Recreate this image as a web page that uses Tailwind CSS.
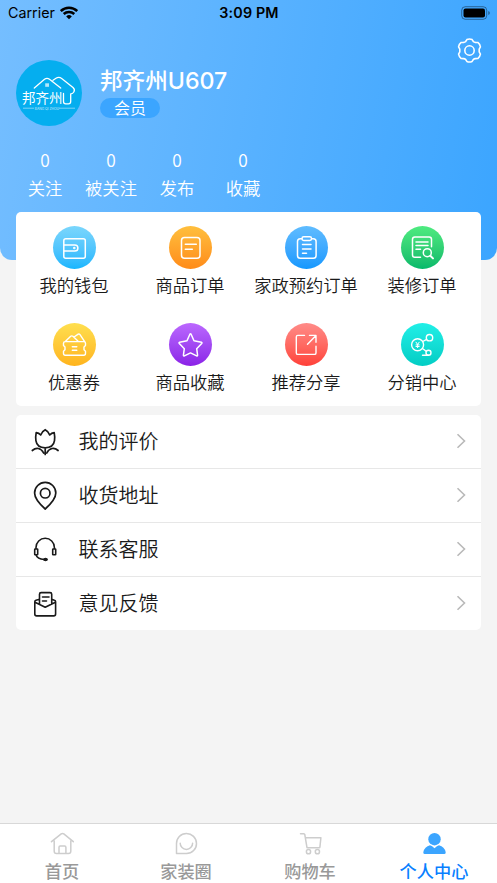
<!DOCTYPE html>
<html lang="zh-CN">
<head>
<meta charset="utf-8">
<title>个人中心</title>
<script src="https://cdn.jsdelivr.net/npm/@tailwindcss/browser@4"></script>
</head>
<body class="bg-[#f4f4f4] font-['Inter','Noto_Sans_CJK_SC',sans-serif] text-[#1a1a1a]">
<div class="w-[497px] h-[883px] flex flex-col overflow-hidden">
  <header class="h-[260px] shrink-0 rounded-b-[12px] bg-linear-[100deg,#75beff,#3ba5ff] text-white flex flex-col">
    <div class="h-[26px] pl-2 pr-[7px] flex items-center justify-between text-black text-[14.3px] leading-[26px]">
      <div class="w-[140px] flex items-center gap-[5px]"><span>Carrier</span>
        <svg width="18" height="14" viewBox="0 0 18 14" fill="none" stroke="#000" stroke-width="2.5"><path d="M.8 5A11.8 11.8 0 0 1 17.2 5M3.7 8a7.8 7.8 0 0 1 10.6 0"/><path d="M9 13.2 6.2 10.4a4 4 0 0 1 5.600 0Z" fill="#000" stroke="none"/></svg>
      </div>
      <span class="font-semibold tracking-[0.15px]">3:09 PM</span>
      <div class="w-[140px] flex justify-end">
        <svg width="29" height="14" viewBox="0 0 29 14"><rect x=".7" y=".7" width="25" height="12.6" rx="3.6" fill="none" stroke="#000" stroke-opacity=".4"/><rect x="2.5" y="2.4" width="21.5" height="9.2" rx="2" fill="#000"/><path d="M27.3 5v4q1.5-.5 1.5-2t-1.5-2Z" fill="#000" fill-opacity=".45"/></svg>
      </div>
    </div>
    <div class="h-[34px] pt-[12px] pr-[15.500px] flex justify-end">
      <svg class="shrink-0" width="25" height="25" viewBox="0 0 24 24" fill="none" stroke="#fff" stroke-width="1.500" stroke-linejoin="round"><path d="M9.500 1.500Q12 .4 14.500 1.500L15.700 3.400Q16.600 4 17.600 4.200L20 4.300Q22 5.800 22.500 8.500L21.300 10.700V13.300L22.500 15.500Q22 18.200 20 19.700L17.600 19.800Q16.600 20 15.700 20.600L14.500 22.500Q12 23.600 9.500 22.500L8.300 20.600Q7.400 20 6.400 19.800L4 19.700Q2 18.200 1.500 15.500L2.700 13.300V10.700L1.500 8.500Q2 5.800 4 4.300L6.400 4.200Q7.400 4 8.300 3.400Z"/><circle cx="12" cy="12" r="4.500"/></svg>
    </div>
    <div class="h-[66px] pl-4 flex gap-[18px]">
      <svg class="shrink-0" width="66" height="66" viewBox="0 0 66 66"><circle cx="33" cy="33" r="33" fill="#05aeef"/><g fill="none" stroke="#fff" stroke-width="1.300" stroke-linecap="round" stroke-linejoin="round"><path d="M18.300 28 28.500 19.300q2.500-2 5 0L44.700 28M37 20.200l3-2q3-1.700 6 .5L57 27.500q2.300 2.200.8 4.500-1 1.700-3.100 2v7.500q0 2.300-2.300 2.300h-2.700q-2.200 0-2.200-2.300v-8"/></g><path d="M29.200 23.300h3.800v3.500h-3.800z" fill="#fff" opacity=".7"/><text x="6" y="43.300" font-family="Noto Sans CJK SC" font-size="13.500" fill="#fff">邦齐州</text><path d="M7 48.200h11M43 48.200h16" stroke="#fff" stroke-opacity=".6" stroke-width=".8"/><text x="18.800" y="49.500" font-family="Inter" font-size="3.300" fill="#fff" opacity=".75">BANG QI ZHOU</text></svg>
      <div class="flex flex-col items-start">
        <div class="h-[38px] text-[22.600px] leading-[41px] font-medium whitespace-nowrap"><span>邦齐州</span><span class="text-[23.200px]">U607</span></div>
        <div class="w-[60px] h-[20px] rounded-full bg-[#3ba5ff] text-center text-[16px] leading-[20px] font-[350]">会员</div>
      </div>
    </div>
    <div class="pl-3 pt-[20px] flex text-[17.300px] text-center font-[350] font-['Noto_Sans_CJK_SC',sans-serif]">
      <div class="w-[66px]"><div class="h-[28px] leading-[27px]">0</div><div class="h-[28px] leading-[28px]">关注</div></div>
      <div class="w-[66px]"><div class="h-[28px] leading-[27px]">0</div><div class="h-[28px] leading-[28px]">被关注</div></div>
      <div class="w-[66px]"><div class="h-[28px] leading-[27px]">0</div><div class="h-[28px] leading-[28px]">发布</div></div>
      <div class="w-[66px]"><div class="h-[28px] leading-[27px]">0</div><div class="h-[28px] leading-[28px]">收藏</div></div>
    </div>
  </header>
  <main class="flex-1 -mt-[48px] px-4">
    <section class="h-[194px] pt-[14px] pr-[1px] rounded-[5px] bg-white grid grid-cols-4 auto-rows-[97px] text-[17.300px] leading-[26px] text-center whitespace-nowrap font-[350]">
      <div class="flex flex-col items-center gap-[4px]">
        <div class="size-[43px] rounded-full bg-linear-to-b from-[#7ad6fc] to-[#14b6fe]"><svg width="43" height="43" fill="none" stroke="#fff" stroke-width="1.500" stroke-linejoin="round"><rect x="10.800" y="12.800" width="21.500" height="19.500" rx="2"/><path d="M11 18.900h10.800a3.100 3.100 0 0 1 0 6.200H11"/><circle cx="21.300" cy="22" r=".5"/></svg></div><span>我的钱包</span></div>
      <div class="flex flex-col items-center gap-[4px]">
        <div class="size-[43px] rounded-full bg-linear-to-b from-[#ffbf3d] to-[#ff8b18]"><svg width="43" height="43" fill="none" stroke="#fff" stroke-width="1.500" stroke-linecap="round"><rect x="12.500" y="11.500" width="18.500" height="20.700" rx="3"/><path d="M16.300 18.200h11M16.300 23.200h7"/></svg></div><span>商品订单</span></div>
      <div class="flex flex-col items-center gap-[4px]">
        <div class="size-[43px] rounded-full bg-linear-to-b from-[#5fbcff] to-[#1298fe]"><svg width="43" height="43" fill="none" stroke="#fff" stroke-width="1.500" stroke-linecap="round"><path d="M16.800 12.800h-1.500q-2.800 0-2.800 2.800v13.900q0 2.800 2.800 2.800h13q2.800 0 2.800-2.800V15.600q0-2.800-2.800-2.800h-1.500"/><rect x="17" y="10.800" width="9.500" height="3.700" rx="1.700"/><path d="M17.500 18.500h8.500M17.500 23.100h8.500M17.500 27.300h4"/></svg></div><span>家政预约订单</span></div>
      <div class="flex flex-col items-center gap-[4px]">
        <div class="size-[43px] rounded-full bg-linear-to-b from-[#4eeb80] to-[#03b96a]"><svg width="43" height="43" fill="none" stroke="#fff" stroke-width="1.500" stroke-linecap="round"><path d="M19.500 31.300h-5.700q-2.300 0-2.300-2.300V13.200q0-2.300 2.300-2.300h14.400q2.300 0 2.300 2.300v7.500M15 16h12M15 19.600h12M15 23.200h4.500"/><circle cx="26.300" cy="26.700" r="4"/><path d="m29.300 29.700 2.700 2.700" stroke-width="2"/></svg></div><span>装修订单</span></div>
      <div class="flex flex-col items-center gap-[4px]">
        <div class="size-[43px] rounded-full bg-linear-to-b from-[#ffdf4e] to-[#ffb41c]"><svg width="43" height="43" fill="none" stroke="#fff" stroke-width="1.400" stroke-linejoin="round" stroke-linecap="round"><path d="M12.300 18.600h18.400q1.800 0 1.800 1.700v2.200l-1.500 1.500v2.800l1.500 1.500v2q0 2-1.800 2H12.300q-1.800 0-1.800-2v-2l1.500-1.500V24l-1.500-1.500v-2.200q0-1.700 1.800-1.700Z"/><path d="m12.500 18.300 5.200-5q1-.9 2.200 0l5 4.600M21 14l4.200-2.900q1-.5 1.800.5l4.500 6.700M19.300 23.700h4.500M19.300 27.300h4.500"/></svg></div><span>优惠券</span></div>
      <div class="flex flex-col items-center gap-[4px]">
        <div class="size-[43px] rounded-full bg-linear-to-b from-[#bb67fe] to-[#8b20e7]"><svg width="43" height="43" fill="none" stroke="#fff" stroke-width="1.500" stroke-linejoin="round"><path d="M20.900 11.200q.6-.8 1.200 0l2.900 6.500 7.400 1.500q1 .4.300 1.200l-5 5.300.9 6.600q-.1 1-1 .6l-6.100-3-6.100 3q-.9.400-1-.6l.9-6.600-5-5.300q-.7-.8.300-1.200l7.400-1.500Z"/></svg></div><span>商品收藏</span></div>
      <div class="flex flex-col items-center gap-[4px]">
        <div class="size-[43px] rounded-full bg-linear-to-b from-[#ff8b88] to-[#ff3f38]"><svg width="43" height="43" fill="none" stroke="#fff" stroke-width="1.400" stroke-linecap="round" stroke-linejoin="round"><path d="M19.500 12.400h-6.700q-1.500 0-1.500 1.500v16q0 1.500 1.500 1.500h16.700q1.500 0 1.500-1.500v-6.700M22.500 21.300l8.500-8.700M24.500 12.400H31v6.800"/></svg></div><span>推荐分享</span></div>
      <div class="flex flex-col items-center gap-[4px]">
        <div class="size-[43px] rounded-full bg-linear-to-b from-[#20efe7] to-[#02cdc4]"><svg width="43" height="43" fill="none" stroke="#fff" stroke-width="1.400" stroke-linecap="round"><circle cx="16.600" cy="21.700" r="6"/><circle cx="28.500" cy="14.700" r="3.200"/><circle cx="27.500" cy="29.700" r="2.500"/><path d="m21.700 18.500 4-2.200M21.500 25.500l3.700 2.700M21.500 32.200h6"/><path d="m15 19.200 1.600 2.200 1.600-2.200M16.600 21.400v3.200M15 21.900h3.200M15 23.500h3.200" stroke-width="1"/></svg></div><span>分销中心</span></div>
    </section>
    <section class="mt-[9px] rounded-[5px] bg-white overflow-hidden text-[20px] font-[350]">
      <div class="h-[54px] pl-[14px] pr-[15px] flex items-center border-b border-[#e7e7e7]">
        <svg width="30" height="30" fill="none" stroke="#1a1a1a" stroke-width="1.700" stroke-linecap="round" stroke-linejoin="round"><path d="M6.200 5.700q2.700.4 4.500 2.300 1.300-3.800 4.500-5.300 3.200 1.500 4.500 5.300 1.800-1.900 4.500-2.300.8 4 .3 8-1 7-9.300 7.100-8.300-.1-9.300-7.100-.5-4 .3-8ZM15.200 21v6.500M2.300 23.500q3-2.600 6-2 3.500.7 5.300 4.500M28.100 23.500q-3-2.600-6-2-3.500.7-5.300 4.500"/></svg><span class="ml-[18.500px] flex-1">我的评价</span><svg class="-mt-px" width="10" height="16" fill="none" stroke="#b9b9b9" stroke-width="1.600"><path d="m1.500 1.200 7 6.800-7 6.800"/></svg></div>
      <div class="h-[54px] pl-[14px] pr-[15px] flex items-center border-b border-[#e7e7e7]">
        <svg width="30" height="30" fill="none" stroke="#1a1a1a" stroke-width="1.700" stroke-linejoin="round"><path d="M15.200 28Q4.600 18.500 4.600 12a10.600 10.600 0 0 1 21.200 0q0 6.500-10.600 16Z"/><circle cx="15.200" cy="12.200" r="4.800"/></svg><span class="ml-[18.500px] flex-1">收货地址</span><svg class="-mt-px" width="10" height="16" fill="none" stroke="#b9b9b9" stroke-width="1.600"><path d="m1.500 1.200 7 6.800-7 6.800"/></svg></div>
      <div class="h-[54px] pl-[14px] pr-[15px] flex items-center border-b border-[#e7e7e7]">
        <svg width="30" height="30" fill="none" stroke="#1a1a1a" stroke-width="1.600" stroke-linejoin="round"><path d="M6 14v-1.500a9.200 9.200 0 0 1 18.400 0V14M6 20q1.500 4 8 4.500"/><rect x="4.700" y="14" width="3" height="5.800" rx=".5"/><rect x="22.700" y="14" width="3" height="5.800" rx=".5"/><ellipse cx="15.500" cy="24.500" rx="2.400" ry="1.700" fill="#1a1a1a" stroke="none"/></svg><span class="ml-[18.500px] flex-1">联系客服</span><svg class="-mt-px" width="10" height="16" fill="none" stroke="#b9b9b9" stroke-width="1.600"><path d="m1.500 1.200 7 6.800-7 6.800"/></svg></div>
      <div class="h-[53px] pl-[14px] pr-[15px] flex items-center">
        <svg width="30" height="30" fill="none" stroke="#1a1a1a" stroke-width="1.600" stroke-linecap="round" stroke-linejoin="round"><path d="m9.500 10.200-3.500 1q-1.200.4-1.200 1.500v12.400q0 1.800 1.800 1.800h17.200q1.800 0 1.800-1.800V12.700q0-1.100-1.200-1.500l-2.700-1M5 13.200l10.200 5 10.200-5M9.500 15V5.200q0-1.600 1.600-1.600h9q1.600 0 1.600 1.600V15M12.500 8h6.500M12.500 12h4"/></svg><span class="ml-[18.500px] flex-1">意见反馈</span><svg class="-mt-px" width="10" height="16" fill="none" stroke="#b9b9b9" stroke-width="1.600"><path d="m1.500 1.200 7 6.800-7 6.800"/></svg></div>
    </section>
  </main>
  <nav class="h-[60px] shrink-0 pr-[1px] bg-white border-t border-[#d8d8d8] grid grid-cols-4 text-center text-[17.200px] leading-[26px] font-medium text-[#999]">
    <div class="pt-[8px] flex flex-col items-center gap-[3px]"><svg width="24" height="24" fill="none" stroke="#cdcdcd" stroke-width="1.500" stroke-linecap="round" stroke-linejoin="round"><path d="m1.500 9.700 9.700-7.800q1.300-1 2.600 0l9.500 7.800M4.200 8.500v10.800q0 2.300 2.300 2.300h12q2.300 0 2.300-2.300V8.500M9 21.500v-6.300q0-1.200 1.200-1.200h4.500q1.200 0 1.200 1.200v6.300"/></svg><span>首页</span></div>
    <div class="pt-[8px] flex flex-col items-center gap-[3px]"><svg width="24" height="24" fill="none" stroke="#cdcdcd" stroke-width="1.500" stroke-linecap="round" stroke-linejoin="round"><path d="M2.500 21.500v-9.800a10 10 0 1 1 10 9.800ZM6.200 11.200a6.200 6.200 0 0 0 12.400 0"/></svg><span>家装圈</span></div>
    <div class="pt-[8px] flex flex-col items-center gap-[3px]"><svg width="24" height="24" fill="none" stroke="#cdcdcd" stroke-width="1.500" stroke-linecap="round" stroke-linejoin="round"><path d="M2.500 1.700h3.200q1 0 1.100 1L9 15.700h12.300q.5 0 .6-.6l1-9.400H7.300"/><circle cx="10.500" cy="19.700" r="2.100"/><circle cx="19.400" cy="19.700" r="2.100"/></svg><span>购物车</span></div>
    <div class="pt-[8px] flex flex-col items-center gap-[3px] text-[#087fff]"><svg width="24" height="24" fill="#3ba5ff"><circle cx="12.500" cy="7.200" r="6.200"/><path d="M8 13.300q2 .3 4.500 3 2.500-2.700 4.500-3 5.500 1.300 6.700 7 .2 1.600-1.200 1.600h-20q-1.400 0-1.200-1.600 1.200-5.700 6.700-7Z"/></svg><span>个人中心</span></div>
  </nav>
</div>
</body>
</html>
